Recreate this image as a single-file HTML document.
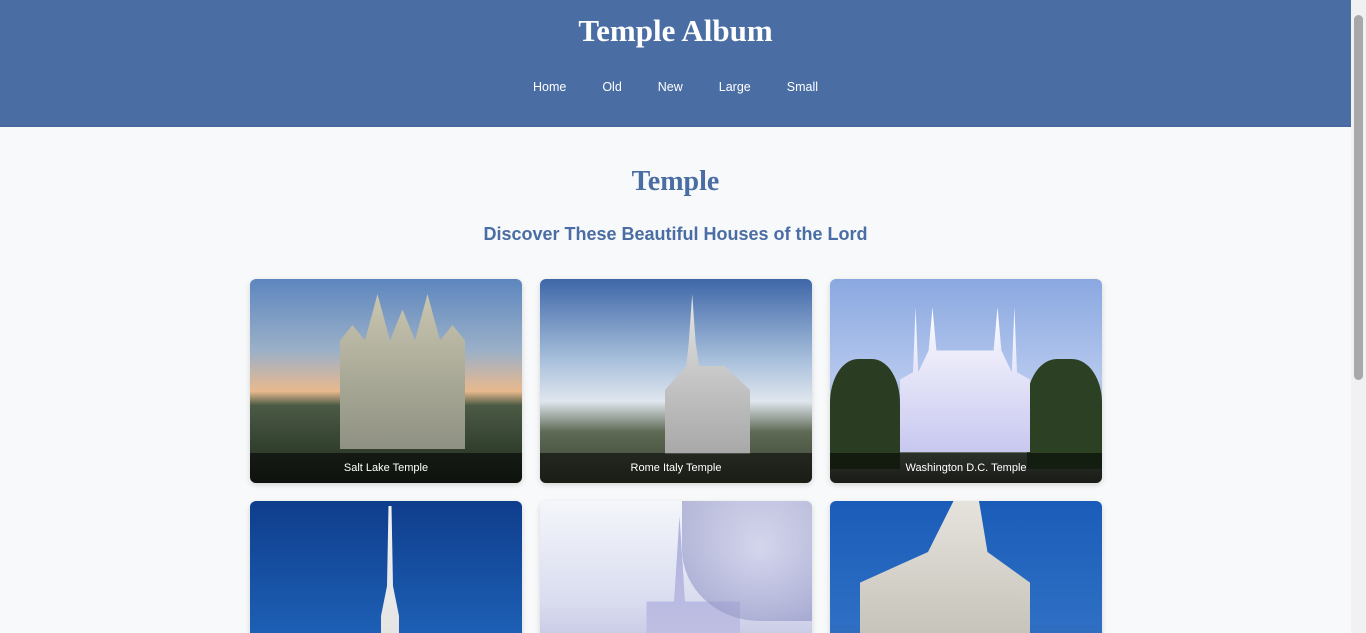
<!DOCTYPE html>
<html><head><meta charset="utf-8"><style>
*{margin:0;padding:0;box-sizing:border-box}
html,body{width:1366px;height:633px;overflow:hidden}
body{background:#f8f9fa;font-family:"Liberation Sans",sans-serif;position:relative}
.wrap{width:1351px}
header{background:#4a6da4;height:127px;text-align:center;color:#fff;border-bottom:2px solid #46699f;position:relative}
h1{font-family:"Liberation Serif",serif;font-weight:bold;font-size:31px;position:absolute;left:0;right:0;top:13px;letter-spacing:0}
nav{font-size:12.5px;position:absolute;left:0;right:0;top:80px}
nav span{display:inline-block;margin:0 18px}
h2{font-family:"Liberation Serif",serif;color:#4a6da4;font-size:28px;text-align:center;position:absolute;left:0;width:1351px;top:166px}
h3{color:#4a6da4;font-size:18px;font-weight:bold;text-align:center;position:absolute;left:0;width:1351px;top:224px}
.grid{position:absolute;left:250px;top:279px;width:852px;display:grid;grid-template-columns:272px 272px 272px;gap:18px}
.card{height:204px;border-radius:6px;overflow:hidden;position:relative;box-shadow:0 2px 6px rgba(0,0,0,.15)}
.cap{position:absolute;left:0;right:0;bottom:0;height:30px;background:rgba(0,0,0,.55);color:#fff;font-size:11px;text-align:center;line-height:30px}
.sb{position:absolute;right:0;top:0;width:15px;height:633px;background:#f1f1f1}
.th{position:absolute;right:3px;top:15px;width:9px;height:365px;background:#a8a8a8;border-radius:5px}
</style></head><body>
<div class="wrap">
<header><h1>Temple Album</h1><nav><span>Home</span><span>Old</span><span>New</span><span>Large</span><span>Small</span></nav></header>
<h2>Temple</h2>
<h3>Discover These Beautiful Houses of the Lord</h3>
</div>
<div class="grid">
<div class="card" style="background:linear-gradient(180deg,#5d86bf 0%,#9bb0c8 35%,#e8b98e 55%,#4b5a45 62%,#1e2a1c 100%)">
<div style="position:absolute;left:90px;top:15px;width:125px;height:155px;background:linear-gradient(#c9c6b0,#8f9182);clip-path:polygon(0 100%,0 30%,10% 20%,20% 30%,30% 0,40% 30%,50% 10%,60% 30%,70% 0,80% 30%,90% 20%,100% 30%,100% 100%)"></div>
<div class="cap">Salt Lake Temple</div></div>
<div class="card" style="background:linear-gradient(180deg,#3e67a8 0%,#a9c0dc 40%,#dfe6ee 60%,#5e6a55 75%,#39402f 100%)">
<div style="position:absolute;left:125px;top:15px;width:85px;height:160px;background:linear-gradient(#e6e6e6,#a8a8a8);clip-path:polygon(0 100%,0 60%,25% 45%,28% 30%,32% 0,36% 30%,40% 45%,70% 45%,100% 60%,100% 100%)"></div>
<div class="cap">Rome Italy Temple</div></div>
<div class="card" style="background:linear-gradient(180deg,#8aa8e0 0%,#b6c8ee 50%,#6f7f6c 80%,#3b3c35 100%)">
<div style="position:absolute;left:0;top:80px;width:70px;height:110px;background:#2a3d22;border-radius:40% 40% 0 0"></div>
<div style="position:absolute;right:0;top:80px;width:75px;height:110px;background:#2c4124;border-radius:40% 40% 0 0"></div>
<div style="position:absolute;left:70px;top:28px;width:130px;height:145px;background:linear-gradient(#fdfdff,#c8c8f0);clip-path:polygon(0 100%,0 50%,10% 45%,12% 0,14% 45%,22% 30%,25% 0,28% 30%,72% 30%,75% 0,78% 30%,86% 45%,88% 0,90% 45%,100% 50%,100% 100%)"></div>
<div class="cap">Washington D.C. Temple</div></div>
<div class="card" style="background:linear-gradient(180deg,#0f3d8c 0%,#1e62b8 70%,#2a6c9e 100%)">
<div style="position:absolute;left:125px;top:5px;width:30px;height:200px;background:linear-gradient(#f2f2f2,#dcdcdc);clip-path:polygon(45% 0,55% 0,60% 40%,80% 55%,80% 100%,20% 100%,20% 55%,40% 40%)"></div>
<div style="position:absolute;right:0;bottom:0;width:60px;height:50px;background:#1e3a1e;border-radius:50% 0 0 0"></div></div>
<div class="card" style="background:linear-gradient(180deg,#f4f6fb 0%,#d9dcef 50%,#a9a9d2 100%)">
<div style="position:absolute;left:90px;top:15px;width:110px;height:190px;background:linear-gradient(#aeb2de,#c9c6e6);clip-path:polygon(15% 100%,15% 45%,40% 45%,45% 0,50% 45%,100% 45%,100% 100%)"></div>
<div style="position:absolute;right:0;top:0;width:130px;height:120px;background:radial-gradient(circle at 60% 40%,#c7c8e8,#7f83b8);opacity:.6;border-radius:0 0 0 60%"></div></div>
<div class="card" style="background:linear-gradient(180deg,#1a5cb8 0%,#2e6fc4 60%,#3a5d8a 100%)">
<div style="position:absolute;left:30px;top:0;width:170px;height:204px;background:linear-gradient(#e5e3dc,#b7b3aa);clip-path:polygon(0 40%,40% 25%,55% 0,70% 0,75% 25%,100% 40%,100% 100%,0 100%)"></div>
<div style="position:absolute;right:0;bottom:0;width:80px;height:30px;background:#4a4f5a"></div></div>
</div>
<div class="sb"><div class="th"></div></div>
</body></html>
